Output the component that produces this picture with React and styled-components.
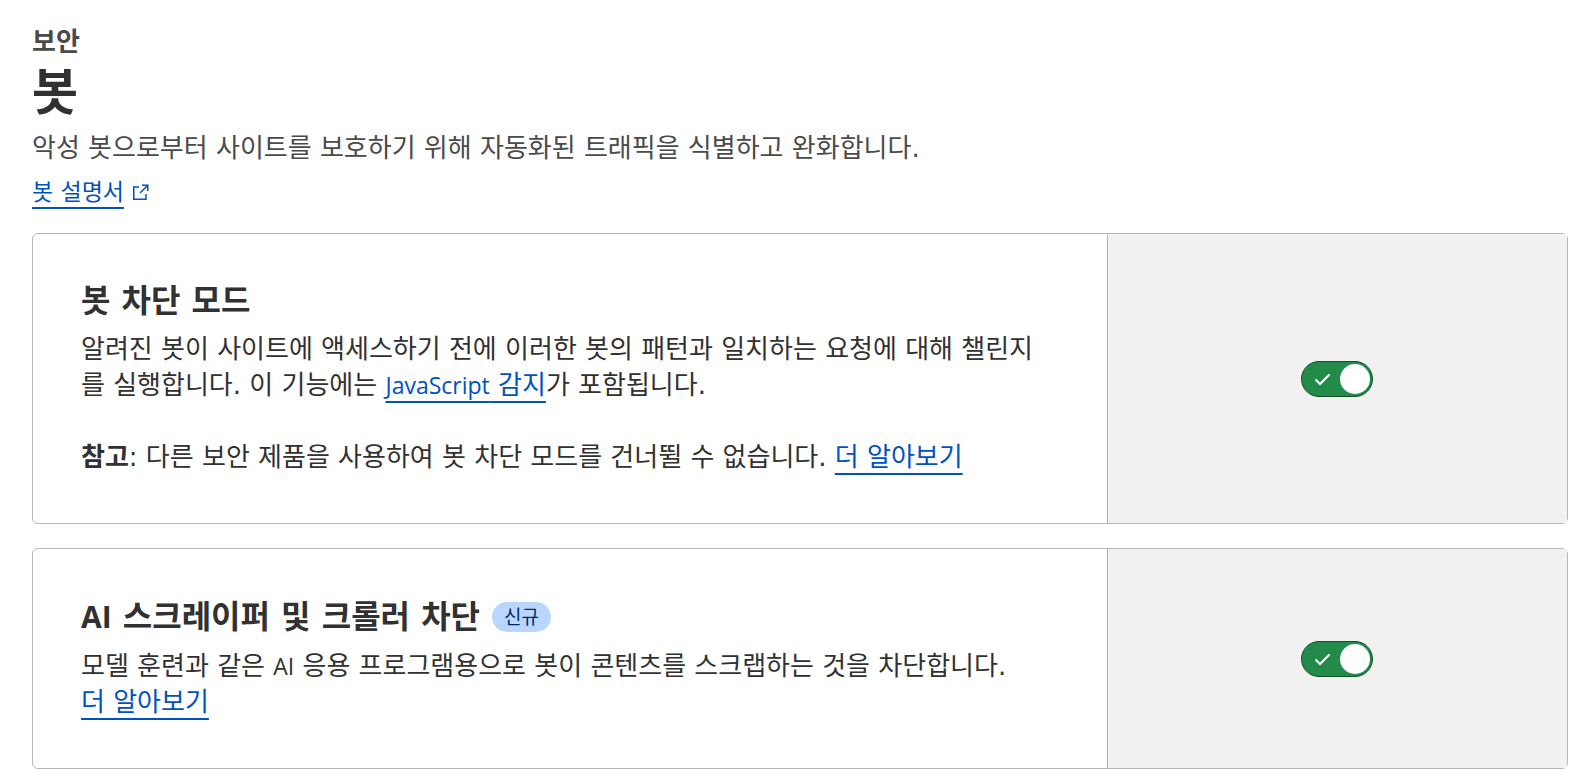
import { useState } from "react";
import styled, { createGlobalStyle } from "styled-components";

const colors = {
  text: "#313131",
  muted: "#4a4a4a",
  link: "#0051c3",
  border: "#b6b6b6",
  panel: "#f1f1f1",
  green: "#228b49",
  greenDark: "#0f5026",
  badge: "#b9d6ff",
  badgeText: "#002b66",
};

const GlobalStyle = createGlobalStyle`
  * {
    box-sizing: border-box;
  }
  body {
    margin: 0;
    background: #ffffff;
    color: ${colors.text};
    font-family: "DejaVu Sans", "Noto Sans CJK KR", sans-serif;
    font-size: 26px;
    line-height: 36px;
  }
`

const Page = styled.main`
  padding: 22px 20px 16px 32px;
`

const Header = styled.header`
  display: flex;
  flex-direction: column;
  align-items: flex-start;
  margin-bottom: 24px;
`

const Section = styled.p`
  margin: 0;
  font-family: "Noto Sans CJK KR", sans-serif;
  font-weight: 700;
  color: ${colors.muted};
`

const PageTitle = styled.h1`
  margin: 0 0 12px;
  font-family: "Noto Sans CJK KR", sans-serif;
  font-size: 50px;
  line-height: 60px;
  font-weight: 700;
`

const Description = styled.p`
  margin: 0 0 10px;
  color: ${colors.muted};
`

const TextLink = styled.a`
  color: ${colors.link};
  text-decoration: underline;
  text-decoration-thickness: 2px;
  text-decoration-skip-ink: none;
  text-underline-offset: 7px;
  white-space: nowrap;
`

const DocsLine = styled.div`
  display: flex;
  align-items: center;
  gap: 8px;
  font-size: 23px;
  line-height: 33px;
  color: ${colors.link};
`

const CardList = styled.div`
  display: flex;
  flex-direction: column;
  gap: 24px;
`

const Card = styled.section`
  display: grid;
  grid-template-columns: 7fr 3fr;
  border: 1px solid ${colors.border};
  border-radius: 6px;
`

const CardBody = styled.div`
  padding: 48px 64px 48px 48px;
`

const CardHead = styled.div`
  display: flex;
  align-items: center;
  gap: 12px;
  margin-bottom: 11px;
`

const CardTitle = styled.h2`
  margin: 0;
  font-size: 32px;
  line-height: 38px;
  font-weight: 700;
`

const Badge = styled.span`
  margin: 5px 0;
  padding: 0 12px;
  border-radius: 15px;
  background: ${colors.badge};
  color: ${colors.badgeText};
  font-size: 19px;
  line-height: 30px;
`

const Text = styled.p`
  margin: 0;
  & + & {
    margin-top: 36px;
  }
`

const Latin = styled.span`
  font-family: "Open Sans", sans-serif;
  font-size: ${({ $large }) => ($large ? "30px" : "23px")};
`

const CardSide = styled.div`
  display: flex;
  align-items: center;
  justify-content: center;
  border-left: 1px solid ${colors.border};
  background: ${colors.panel};
`

const ToggleLabel = styled.label`
  position: relative;
  display: flex;
  cursor: pointer;
`

const ToggleInput = styled.input`
  appearance: none;
  display: flex;
  align-items: center;
  justify-content: ${({ checked }) => (checked ? "flex-end" : "flex-start")};
  width: 72px;
  height: 36px;
  margin: 0;
  padding: 0 2px;
  border: 1px solid ${({ checked }) => (checked ? colors.greenDark : "#797979")};
  border-radius: 18px;
  background: ${({ checked }) => (checked ? colors.green : "#797979")};
  cursor: pointer;
  &::before {
    content: "";
    width: 30px;
    height: 30px;
    border-radius: 50%;
    background: #ffffff;
  }
`

const CheckMark = styled.svg`
  position: absolute;
  top: 12px;
  left: 13px;
  pointer-events: none;
`

function ExternalIcon() {
  return (
    <svg width="17" height="17" viewBox="0 0 17 17" fill="none" stroke="currentColor" strokeWidth="1.5" aria-hidden="true">
      <path d="M7 3H1.75v12.25H14V10" />
      <path d="M10 1.25h5.75V7M15.5 1.5L8 9" />
    </svg>
  )
}

function Toggle({ label }) {
  const [checked, setChecked] = useState(true)
  return (
    <ToggleLabel>
      <ToggleInput
        type="checkbox"
        role="switch"
        aria-label={label}
        checked={checked}
        onChange={(e) => setChecked(e.target.checked)}
      />
      {checked && (
        <CheckMark width="17" height="13" viewBox="0 0 17 13" fill="none" stroke="#ffffff" strokeWidth="2" aria-hidden="true">
          <path d="M1.5 6.5L6 11L15.5 1.5" />
        </CheckMark>
      )}
    </ToggleLabel>
  )
}

function SettingCard({ title, label, badge, children }) {
  return (
    <Card>
      <CardBody>
        <CardHead>
          <CardTitle>{title}</CardTitle>
          {badge && <Badge>{badge}</Badge>}
        </CardHead>
        {children}
      </CardBody>
      <CardSide>
        <Toggle label={label} />
      </CardSide>
    </Card>
  )
}

function App() {
  return (
    <Page lang="ko">
      <GlobalStyle />
      <Header>
        <Section>보안</Section>
        <PageTitle>봇</PageTitle>
        <Description>악성 봇으로부터 사이트를 보호하기 위해 자동화된 트래픽을 식별하고 완화합니다.</Description>
        <DocsLine>
          <TextLink href="#docs">봇 설명서</TextLink>
          <ExternalIcon />
        </DocsLine>
      </Header>
      <CardList>
        <SettingCard title="봇 차단 모드" label="봇 차단 모드">
          <Text>
            알려진 봇이 사이트에 액세스하기 전에 이러한 봇의 패턴과 일치하는 요청에 대해 챌린지를 실행합니다. 이 기능에는{" "}
            <TextLink href="#detections"><Latin>JavaScript</Latin> 감지</TextLink>가 포함됩니다.
          </Text>
          <Text>
            <strong>참고</strong>: 다른 보안 제품을 사용하여 봇 차단 모드를 건너뛸 수 없습니다.{" "}
            <TextLink href="#bot-mode">더 알아보기</TextLink>
          </Text>
        </SettingCard>
        <SettingCard
          title={<><Latin $large>AI</Latin> 스크레이퍼 및 크롤러 차단</>}
          label="AI 스크레이퍼 및 크롤러 차단"
          badge="신규"
        >
          <Text>
            모델 훈련과 같은 <Latin>AI</Latin> 응용 프로그램용으로 봇이 콘텐츠를 스크랩하는 것을 차단합니다.{" "}
            <TextLink href="#ai-crawlers">더 알아보기</TextLink>
          </Text>
        </SettingCard>
      </CardList>
    </Page>
  )
}

export default App;
